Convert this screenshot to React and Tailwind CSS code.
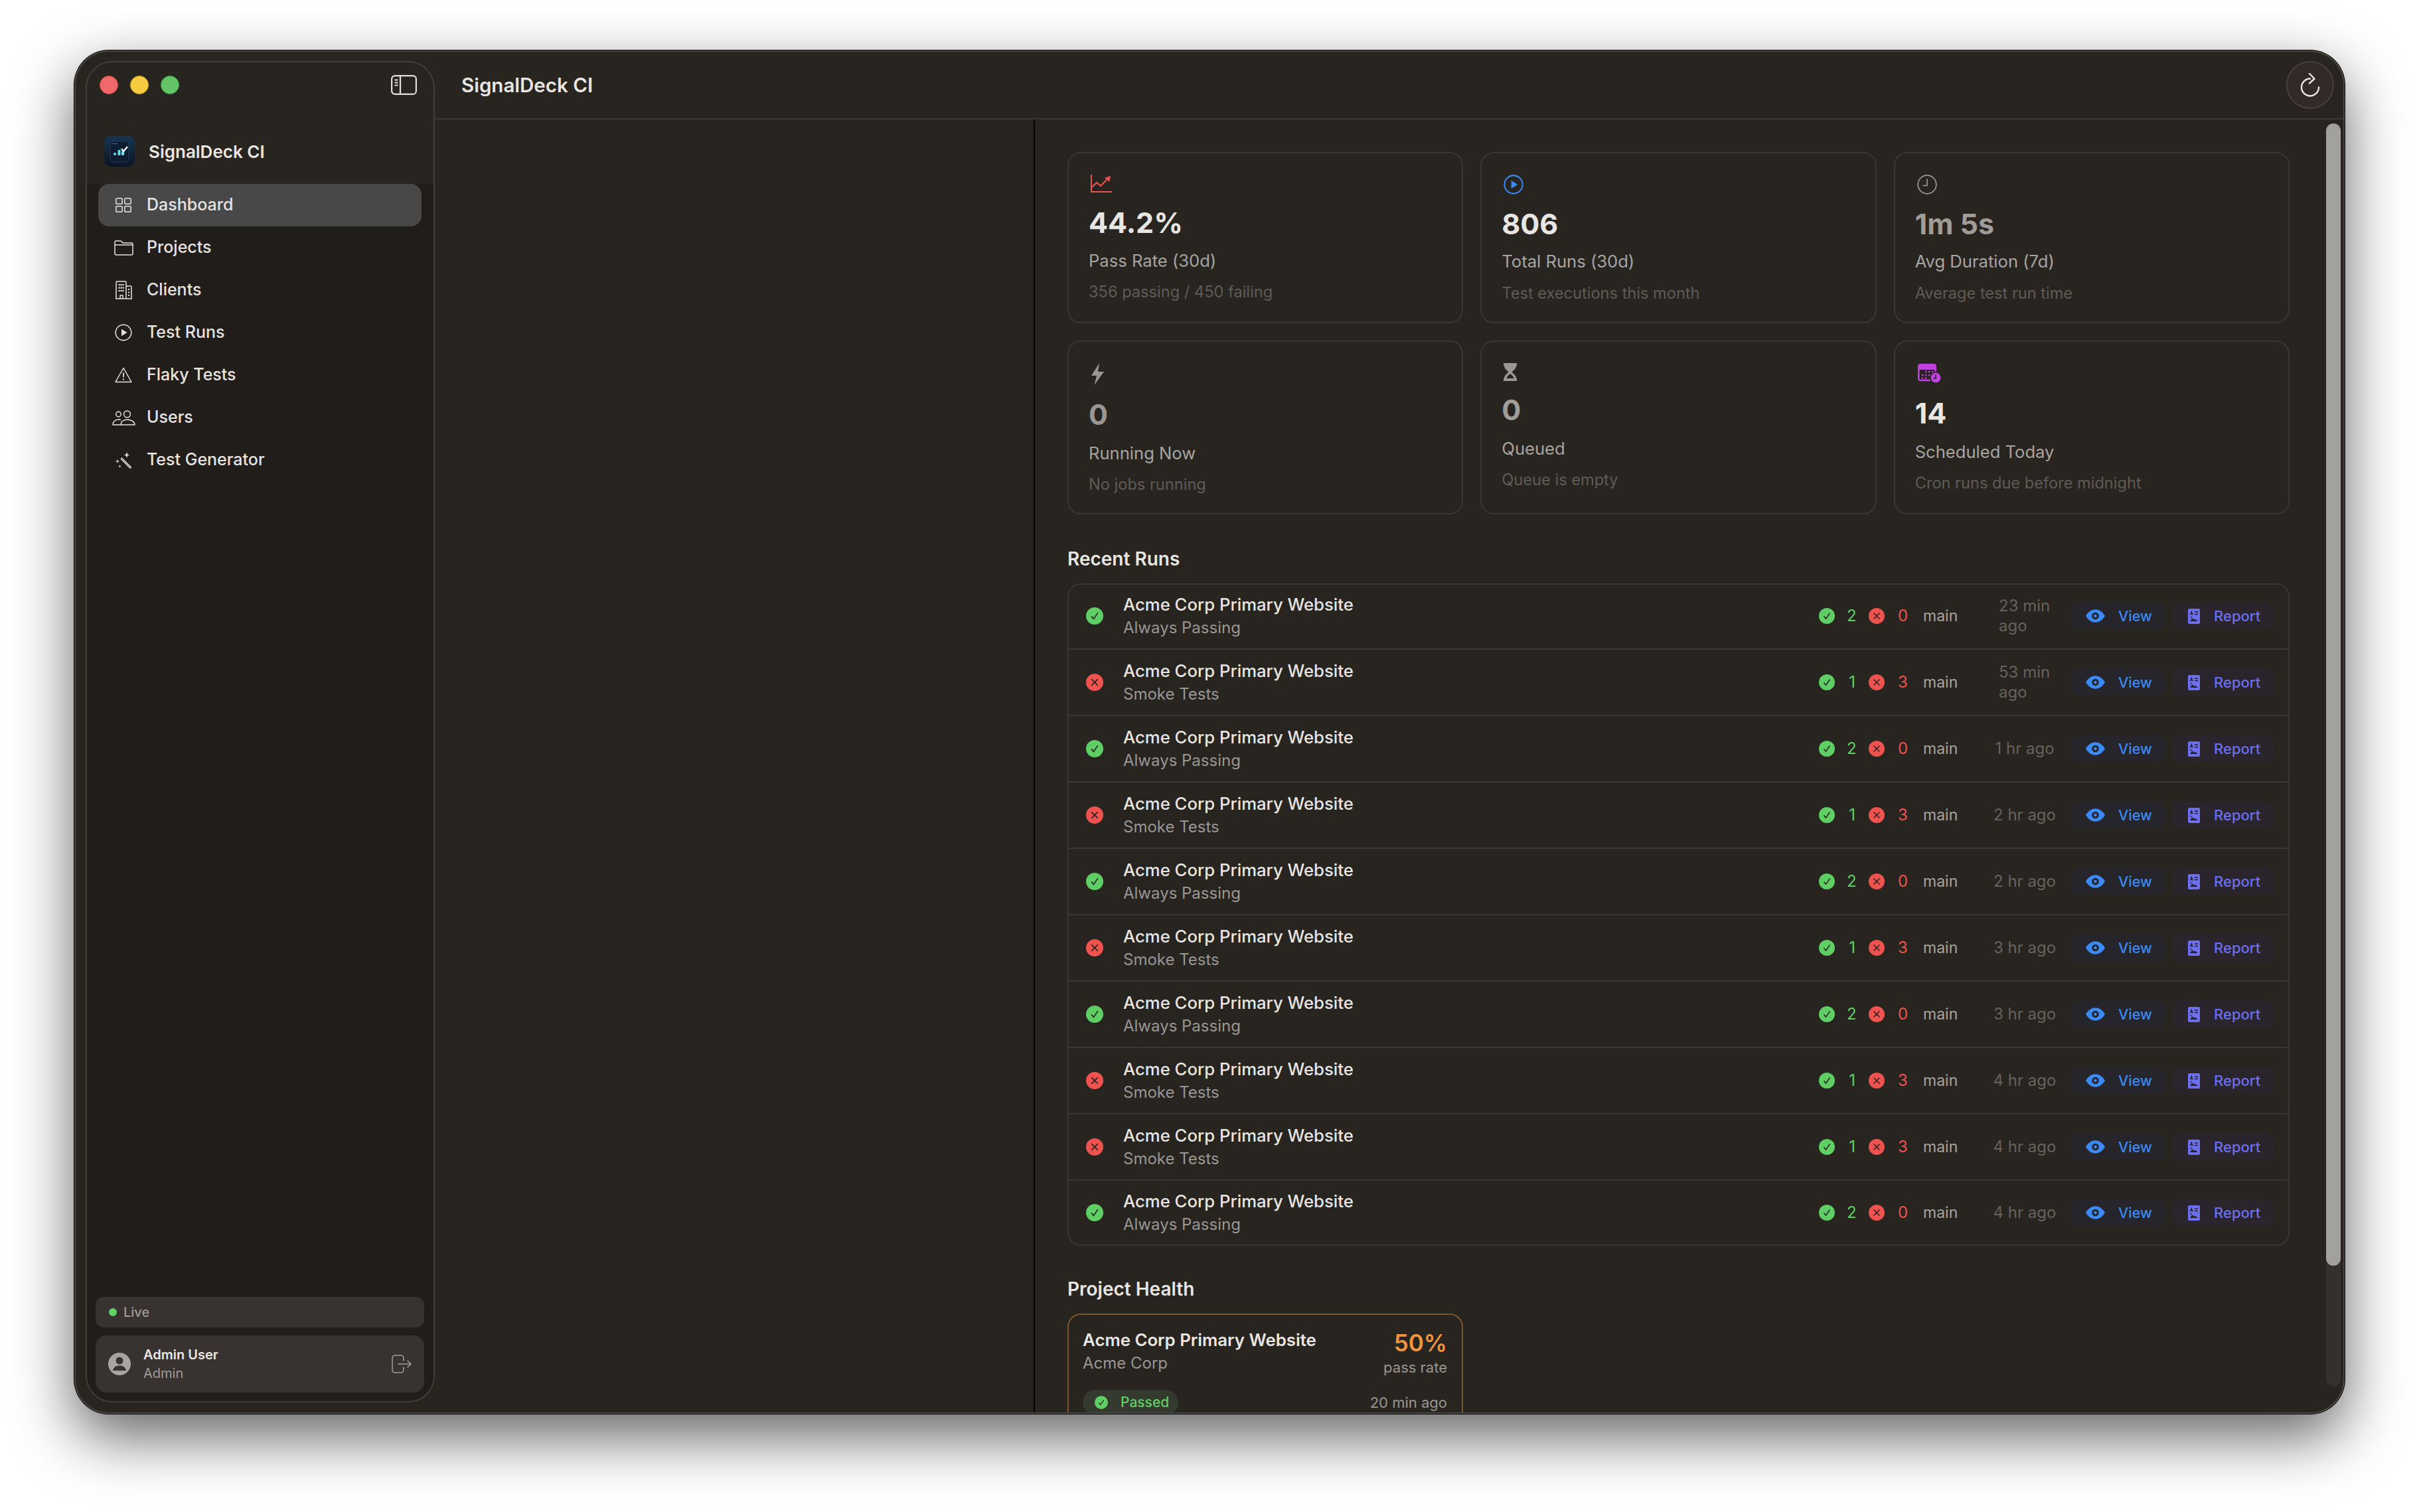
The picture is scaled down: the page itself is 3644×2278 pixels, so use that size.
import React from 'react';

const font = "font-['Inter','Noto_Sans',sans-serif]";

// sidebar icons, drawn to the reference's proportions
const DashIcon = () => (
  <svg viewBox="0 0 24 22" width="24" height="22" fill="none" stroke="currentColor" strokeWidth="1.5">
    <rect x="0.800" y="0.800" width="9.400" height="8.400" rx="1.800" />
    <rect x="13.800" y="0.800" width="9.400" height="8.400" rx="1.800" />
    <rect x="0.800" y="12.800" width="9.400" height="8.400" rx="1.800" />
    <rect x="13.800" y="12.800" width="9.400" height="8.400" rx="1.800" />
  </svg>
);
const FolderIcon = () => (
  <svg viewBox="0 0 29 23" width="29" height="23" fill="none" stroke="currentColor" strokeWidth="1.5" strokeLinejoin="round">
    <path d="M1 5V3a2 2 0 012-2h6.500a2 2 0 011.500.700L13 4h13a2 2 0 012 2v14a2 2 0 01-2 2H3a2 2 0 01-2-2z" />
    <path d="M1 7h27" />
  </svg>
);
const BuildingIcon = () => (
  <svg viewBox="0 0 25 28" width="25" height="28" fill="none" stroke="currentColor" strokeWidth="1.500">
    <path d="M1 27V2.500A1.500 1.500 0 012.500 1h12A1.500 1.500 0 0116 2.500V27M16 8h6.500A1.500 1.500 0 0124 9.500V27M0 27h25" />
    <path d="M7 27v-5h4v5" />
    <g fill="currentColor" stroke="none">
      <rect x="4.500" y="5" width="2.200" height="2.200" /><rect x="7.500" y="5" width="2.200" height="2.200" /><rect x="10.500" y="5" width="2.200" height="2.200" />
      <rect x="4.500" y="9.500" width="2.200" height="2.200" /><rect x="7.500" y="9.500" width="2.200" height="2.200" /><rect x="10.500" y="9.500" width="2.200" height="2.200" />
      <rect x="4.500" y="14" width="2.200" height="2.200" /><rect x="7.500" y="14" width="2.200" height="2.200" /><rect x="10.500" y="14" width="2.200" height="2.200" />
      <rect x="19" y="12" width="2" height="2" /><rect x="19" y="16.500" width="2" height="2" /><rect x="19" y="21" width="2" height="2" />
    </g>
  </svg>
);
const PlayIcon = ({ size = 26, sw = 1.500 }) => (
  <svg viewBox="0 0 26 26" width={size} height={size} fill="none" stroke="currentColor" strokeWidth={sw}>
    <circle cx="13" cy="13" r="11.800" />
    <path d="M10 7.800L18.500 13 10 18.200z" fill="currentColor" stroke="none" />
  </svg>
);
const WarnIcon = () => (
  <svg viewBox="0 0 26 24" width="26" height="24" fill="none" stroke="currentColor" strokeWidth="1.500" strokeLinejoin="round">
    <path d="M13 1.500L25 22.500H1z" />
    <path d="M13 8.500v7" strokeWidth="1.800" />
    <circle cx="13" cy="18.700" r="1.100" fill="currentColor" stroke="none" />
  </svg>
);
const UsersIcon = () => (
  <svg viewBox="0 0 35 23" width="35" height="23" fill="none" stroke="currentColor" strokeWidth="1.400" strokeLinejoin="round">
    <circle cx="9.500" cy="6" r="3.800" />
    <circle cx="22.500" cy="6" r="5" />
    <path d="M13 22c0-4.800 4-7.800 9.700-7.800 5.700 0 11.300 3 11.300 7.800z" />
    <path d="M13 14.800c-1-.5-2.200-.8-3.500-.8C4.800 14 1 17.500 1 22h12" />
  </svg>
);
const WandIcon = () => (
  <svg viewBox="0 0 25 25" width="25" height="25" fill="none" stroke="currentColor" strokeWidth="1.400">
    <path d="M9 8.500L24 23.500M7.800 10L22.800 25" />
    <g fill="currentColor" stroke="none">
      <path d="M17 0l1.100 3.400 3.400 1.100-3.400 1.100L17 9l-1.100-3.400-3.400-1.100 3.400-1.100z" />
      <path d="M3 11l.8 2.200 2.200.8-2.200.8L3 17l-.8-2.200L0 14l2.200-.8z" />
      <path d="M6.500 19l.6 1.900 1.900.6-1.900.6-.6 1.900-.6-1.900-1.900-.6 1.900-.6z" />
    </g>
  </svg>
);

const navItems = [
  { label: 'Dashboard', icon: <DashIcon />, active: true },
  { label: 'Projects', icon: <FolderIcon /> },
  { label: 'Clients', icon: <BuildingIcon /> },
  { label: 'Test Runs', icon: <PlayIcon /> },
  { label: 'Flaky Tests', icon: <WarnIcon /> },
  { label: 'Users', icon: <UsersIcon /> },
  { label: 'Test Generator', icon: <WandIcon /> },
];

const runs = [
  { ok: true, job: 'Always Passing', time: '23 min ago', wrap: true },
  { ok: false, job: 'Smoke Tests', time: '53 min ago', wrap: true },
  { ok: true, job: 'Always Passing', time: '1 hr ago' },
  { ok: false, job: 'Smoke Tests', time: '2 hr ago' },
  { ok: true, job: 'Always Passing', time: '2 hr ago' },
  { ok: false, job: 'Smoke Tests', time: '3 hr ago' },
  { ok: true, job: 'Always Passing', time: '3 hr ago' },
  { ok: false, job: 'Smoke Tests', time: '4 hr ago' },
  { ok: false, job: 'Smoke Tests', time: '4 hr ago' },
  { ok: true, job: 'Always Passing', time: '4 hr ago' },
];

const CheckDot = ({ size = 24 }) => (
  <svg viewBox="0 0 24 24" width={size} height={size} className="shrink-0 text-[#5fcf65]">
    <circle cx="12" cy="12" r="12" fill="currentColor" />
    <path d="M7.800 12.800l2.800 3.400 5.600-8.200" fill="none" stroke="#26221e" strokeWidth="1.500" strokeLinecap="round" strokeLinejoin="round" />
  </svg>
);

const CrossDot = ({ size = 24 }) => (
  <svg viewBox="0 0 24 24" width={size} height={size} className="shrink-0 text-[#ef5350]">
    <circle cx="12" cy="12" r="12" fill="currentColor" />
    <path d="M8 8l8 8M16 8l-8 8" fill="none" stroke="#26221e" strokeWidth="1.500" strokeLinecap="round" />
  </svg>
);

const EyeIcon = () => (
  <svg viewBox="0 0 30 20" width="29" height="20" className="shrink-0 text-[#3b8af5]">
    <path fillRule="evenodd" fill="currentColor" d="M15 0c7 0 12 5 15 10-3 5-8 10-15 10S3 15 0 10C3 5 8 0 15 0zm0 4.500a5.500 5.500 0 100 11 5.500 5.500 0 000-11zm0 3.200a2.300 2.300 0 110 4.600 2.300 2.300 0 010-4.600z" />
  </svg>
);

const ReportIcon = () => (
  <svg viewBox="0 0 18 23" width="18" height="23" className="shrink-0 text-[#6b6ff0]">
    <rect width="18" height="23" rx="2" fill="currentColor" />
    <g fill="none" stroke="#26221e" strokeWidth="1.300">
      <path d="M3.500 9.500l1.800-5 1.800 5M4.200 7.800h2.200" />
      <path d="M10 5h5M10 8.500h5" />
    </g>
    <path d="M3 19l3.500-5 2.500 3 1.500-1.500L15 19z" fill="#26221e" />
    <circle cx="4.500" cy="13" r="1.100" fill="#26221e" />
  </svg>
);

const ChartIcon = () => (
  <svg viewBox="0 0 32 27" width="32" height="27" className="text-[#ef5350]" fill="none" stroke="currentColor" strokeWidth="2">
    <path d="M1 0v26h31" />
    <path d="M2 19l7-7 6 5 9-9" strokeWidth="2.200" />
    <path d="M21 5l9-3-2 9z" fill="currentColor" stroke="none" />
  </svg>
);

const ClockIcon = () => (
  <svg viewBox="0 0 30 30" width="30" height="30" className="text-[#a09c98]" fill="none" stroke="currentColor" strokeWidth="1.700">
    <circle cx="15" cy="15" r="13.800" />
    <path d="M15 6.500V16.500H8.500" />
  </svg>
);

const BoltIcon = () => (
  <svg viewBox="0 0 21 33" width="21" height="33" className="text-[#9a9693]">
    <path d="M13 0L1 19h8L5.500 33 20 13h-9z" fill="currentColor" />
  </svg>
);

const HourglassIcon = () => (
  <svg viewBox="0 0 20 27" width="20" height="27" className="text-[#9a9693]">
    <path d="M0 0h20v4h-1c0 4-3 6-6.500 9.500C16 17 19 19 19 23h1v4H0v-4h1c0-4 3-6 6.500-9.500C4 10 1 8 1 4H0z" fill="currentColor" />
    <path d="M10 16c-3 2.800-5 4.500-5.500 7h11c-.5-2.500-2.500-4.200-5.500-7z" fill="#282420" />
  </svg>
);

const CalendarIcon = () => (
  <svg viewBox="0 0 36 30" width="36" height="30" className="text-[#c040e0]">
    <path d="M1 5a4 4 0 014-4h20a4 4 0 014 4v5H1z" fill="currentColor" />
    <path d="M2.300 9v14a3 3 0 003 3H20M27.700 9v7" fill="none" stroke="currentColor" strokeWidth="2.600" />
    <g fill="currentColor">
      <rect x="12" y="12" width="2.400" height="2.400" /><rect x="17" y="12" width="2.400" height="2.400" /><rect x="22" y="12" width="2.400" height="2.400" />
      <rect x="7" y="17" width="2.400" height="2.400" /><rect x="12" y="17" width="2.400" height="2.400" /><rect x="17" y="17" width="2.400" height="2.400" />
      <rect x="7" y="21.500" width="2.400" height="2.400" /><rect x="12" y="21.500" width="2.400" height="2.400" />
    </g>
    <circle cx="28" cy="22" r="9" fill="#282420" />
    <circle cx="28" cy="22" r="7.500" fill="currentColor" />
    <path d="M28 17.500V23h-3.500" fill="none" stroke="#282420" strokeWidth="1.700" />
  </svg>
);

const SidebarToggle = () => (
  <svg viewBox="0 0 39 30" width="39" height="30" fill="none" stroke="#e2e0dd" strokeWidth="2.200" className="shrink-0">
    <rect x="1.100" y="1.100" width="36.800" height="27.800" rx="5" />
    <path d="M14 1v28" />
    <path d="M5.500 7.500h5M5.500 11.500h5M5.500 15.500h5" strokeWidth="2" />
  </svg>
);

const RefreshIcon = () => (
  <svg viewBox="0 0 30 36" width="30" height="36" fill="none" stroke="#e8e6e3" strokeWidth="2.400" strokeLinecap="round" strokeLinejoin="round">
    <path d="M15 8.500A13 13 0 1028 21.500" />
    <path d="M14 1l7.500 7.500L14 15.500" />
  </svg>
);

const LogoutIcon = () => (
  <svg viewBox="0 0 30 28" width="30" height="28" fill="none" stroke="#a09c98" strokeWidth="1.600" strokeLinecap="round" strokeLinejoin="round" className="shrink-0">
    <path d="M18 9V5a4 4 0 00-4-4H5a4 4 0 00-4 4v18a4 4 0 004 4h9a4 4 0 004-4v-4" />
    <path d="M10 14h19M24 9l5 5-5 5" />
  </svg>
);

const AvatarIcon = () => (
  <svg viewBox="0 0 34 34" width="34" height="34" className="shrink-0">
    <circle cx="17" cy="17" r="17" fill="#a8a4a0" />
    <circle cx="17" cy="12" r="5.500" fill="#383330" />
    <path d="M7 27c.5-5 4.500-7.500 10-7.500S26.500 22 27 27z" fill="#383330" />
  </svg>
);

const AppLogo = () => (
  <svg viewBox="0 0 46 46" width="46" height="46" className="shrink-0">
    <defs>
      <linearGradient id="logoBg" x1="0" y1="0" x2="0" y2="1">
        <stop offset="0" stopColor="#173552" />
        <stop offset="1" stopColor="#0b1524" />
      </linearGradient>
    </defs>
    <rect width="46" height="46" rx="10" fill="url(#logoBg)" />
    <rect x="9" y="8" width="28" height="31" rx="6" fill="#0d1c30" stroke="#2c4a68" strokeWidth="0.700" />
    <g fill="#66dff0">
      <circle cx="16" cy="27" r="2" />
      <rect x="20.500" y="21" width="4" height="8" rx="1" />
      <rect x="26" y="23" width="4" height="6" rx="1" />
    </g>
    <path d="M26 19l3 4 6-7" fill="none" stroke="#e8f6fa" strokeWidth="2.400" />
    <g fill="#5a8fb0">
      <rect x="12" y="11" width="2" height="1" /><rect x="15" y="11" width="2" height="1" /><rect x="18" y="11" width="2" height="1" />
    </g>
  </svg>
);

function StatCard({ icon, value, label, desc, valueClass = 'text-[#e8e6e3]', iconBox = 'h-[30px]', valueBox = 'mt-[18px]', labelBox = 'mt-[13px]', descBox = 'mt-[13px]' }) {
  return (
    <div className="rounded-[20px] border-2 border-[#3a3632] pt-[32px] px-[30px]">
      <div className={`flex items-start pl-[3px] ${iconBox}`}>{icon}</div>
      <div className={`${valueBox} text-[43px] leading-[52px] font-bold ${valueClass}`}>{value}</div>
      <div className={`${labelBox} text-[25.600px] leading-[36px] text-[#a8a4a0]`}>{label}</div>
      <div className={`${descBox} text-[23.600px] leading-[34px] text-[#5f5b57]`}>{desc}</div>
    </div>
  );
}

function RunRow({ run, first, last }) {
  const size = first ? 'h-[98px] pb-[2px] border-b-2 border-[#3a3632]' : last ? 'h-[96px]' : 'h-[100px] border-b-2 border-[#3a3632]';
  return (
    <div className={`flex items-center pl-[26px] pr-[22px] ${size}`}>
      {run.ok ? <CheckDot size={26} /> : <CrossDot size={26} />}
      <div className="ml-[30px] min-w-0">
        <div className="text-[25.700px] leading-[35px] font-medium text-[#e8e6e3]">Acme Corp Primary Website</div>
        <div className="text-[24px] leading-[35px] text-[#9a9693]">{run.job}</div>
      </div>
      <div className="ml-auto flex items-center">
        <CheckDot />
        <span className="ml-[18px] w-[13px] text-right text-[24px] text-[#5fcf65]">{run.ok ? '2' : '1'}</span>
        <span className="ml-[20px]"><CrossDot /></span>
        <span className="ml-[20px] w-[14px] text-[24px] text-[#ef5350]">{run.ok ? '0' : '3'}</span>
        <span className="ml-[24px] w-[54px] text-[23px] text-[#a8a4a0]">main</span>
        <div className="ml-[54px] w-[90px] flex justify-center">
          <span className={`text-[24px] leading-[30px] text-[#66625e] ${run.wrap ? 'w-[78px]' : 'whitespace-nowrap'}`}>{run.time}</span>
        </div>
        <div className="ml-[25px] flex items-center w-[141px] h-[40px] rounded-[12px] bg-[#25252b] pl-[22px]">
          <EyeIcon />
          <span className="ml-[20px] text-[21.500px] font-medium text-[#3b8af5]">View</span>
        </div>
        <div className="ml-[12px] flex items-center w-[152px] h-[40px] rounded-[12px] bg-[#2a252c] pl-[23px]">
          <ReportIcon />
          <span className="ml-[21px] text-[22px] font-medium text-[#6b6ff0]">Report</span>
        </div>
      </div>
    </div>
  );
}

export default function App() {
  return (
    <div className={`w-[3644px] h-[2278px] bg-white pt-[76px] pl-[112px] overflow-hidden ${font}`}>
      <div className="flex w-[3420px] h-[2054px] rounded-[52px] overflow-hidden bg-[#282420] border-2 border-[#4c4845] shadow-[0_0_0_1px_#000,0_34px_90px_rgba(0,0,0,0.62)]">
        <aside className="ml-[15px] mt-[14px] mb-[15px] w-[526px] shrink-0 flex flex-col rounded-[40px] border-2 border-[#443c37] bg-[linear-gradient(180deg,#282420_0,#282420_182px,#211d1a_184px)] px-[17px]">
          <div className="flex items-center justify-between h-[68px] pl-[2px] pr-[8px]">
            <div className="flex gap-[18px]">
              <span className="w-[28px] h-[28px] rounded-full bg-[#f1686b] border border-[#d94b4e]" />
              <span className="w-[28px] h-[28px] rounded-full bg-[#f5cb3f] border border-[#dca922]" />
              <span className="w-[28px] h-[28px] rounded-full bg-[#62c466] border border-[#3ca643]" />
            </div>
            <SidebarToggle />
          </div>
          <div className="flex items-center h-[72px] mt-[30px] pl-[9px]">
            <AppLogo />
            <span className="ml-[21px] text-[26px] font-semibold text-[#e8e6e3]">SignalDeck CI</span>
          </div>
          <nav className="mt-[13px]">
            {navItems.map(({ label, icon, active }) => (
              <div key={label} className={`flex items-center h-[64px] w-[487px] rounded-[16px] pl-[20px] text-[25px] font-medium text-[#e6e4e1] ${active ? 'bg-[#484848]' : ''}`}>
                <span className="w-[36px] flex justify-center">{icon}</span>
                <span className="ml-[17px]">{label}</span>
              </div>
            ))}
          </nav>
          <div className="mt-auto mb-[13px] -ml-[4px] -mr-[3px]">
            <div className="flex items-center h-[46px] rounded-[12px] bg-[#383330] pl-[20px]">
              <span className="w-[12px] h-[12px] rounded-full bg-[#5fd268]" />
              <span className="ml-[10px] text-[20px] font-medium text-[#a09c98]">Live</span>
            </div>
            <div className="flex items-center h-[86px] mt-[12px] rounded-[16px] bg-[#383330] pl-[19px] pr-[19px]">
              <AvatarIcon />
              <div className="ml-[19px]">
                <div className="text-[20px] leading-[28px] font-semibold text-[#e8e6e3]">Admin User</div>
                <div className="text-[20px] leading-[28px] text-[#a09c98]">Admin</div>
              </div>
              <span className="ml-auto"><LogoutIcon /></span>
            </div>
          </div>
        </aside>
        <main className="flex-1 min-w-0 flex flex-col">
          <header className="flex items-center justify-between h-[102px] shrink-0 border-b-2 border-[#3a3632] pl-[40px] pr-[14px]">
            <h1 className="text-[29.500px] font-semibold text-[#e8e6e3]">SignalDeck CI</h1>
            <div className="flex items-center justify-center w-[72px] h-[72px] rounded-full border-2 border-[#4a403b] bg-[#312a27]">
              <RefreshIcon />
            </div>
          </header>
          <div className="flex-1 min-h-0 flex">
            <div className="w-[904px] shrink-0 border-r-2 border-black" />
            <div className="flex-1 min-w-0 relative overflow-hidden">
              <div className="w-[1841px] ml-[49px] pt-[49px]">
                <div className="grid grid-cols-3 grid-rows-[258px_262px] gap-[26px]">
                  <StatCard icon={<ChartIcon />} iconBox="h-[27px]" valueBox="mt-[19px]" labelBox="mt-[14px]" descBox="mt-[12px]" value="44.2%" label="Pass Rate (30d)" desc="356 passing / 450 failing" />
                  <StatCard icon={<span className="text-[#3b8af5]"><PlayIcon size={30} sw={1.800} /></span>} value="806" label="Total Runs (30d)" desc="Test executions this month" />
                  <StatCard icon={<ClockIcon />} value="1m 5s" valueClass="text-[#a09c98]" label="Avg Duration (7d)" desc="Average test run time" />
                  <StatCard icon={<BoltIcon />} iconBox="h-[33px]" valueBox="mt-[18px]" labelBox="mt-[15px]" descBox="mt-[12px]" value="0" valueClass="text-[#9a9693]" label="Running Now" desc="No jobs running" />
                  <StatCard icon={<HourglassIcon />} iconBox="h-[27px]" valueBox="mt-[17px]" labelBox="mt-[15px]" descBox="mt-[12px]" value="0" valueClass="text-[#a09c98]" label="Queued" desc="Queue is empty" />
                  <StatCard icon={<CalendarIcon />} iconBox="h-[30px]" valueBox="mt-[19px]" labelBox="mt-[15px]" descBox="mt-[12px]" value="14" label="Scheduled Today" desc="Cron runs due before midnight" />
                </div>
                <h2 className="mt-[49px] text-[28px] leading-[36px] font-semibold text-[#e8e6e3]">Recent Runs</h2>
                <div className="mt-[19px] rounded-[20px] border-2 border-[#3a3632]">
                  {runs.map((run, i) => <RunRow key={i} run={run} first={i === 0} last={i === runs.length - 1} />)}
                </div>
                <h2 className="mt-[47px] text-[28px] leading-[36px] font-semibold text-[#e8e6e3]">Project Health</h2>
                <div className="mt-[19px] w-[596px] h-[260px] rounded-[20px] border-2 border-[#7a5530] pl-[21px] pr-[22px] pt-[20px]">
                  <div className="flex justify-between">
                    <div>
                      <div className="text-[25.800px] leading-[35px] font-semibold text-[#e8e6e3]">Acme Corp Primary Website</div>
                      <div className="text-[24px] leading-[35px] text-[#9a9693]">Acme Corp</div>
                    </div>
                    <div className="text-right">
                      <div className="text-[35px] leading-[44px] font-semibold text-[#f0943f]">50%</div>
                      <div className="text-[22px] leading-[30px] text-[#9a9693]">pass rate</div>
                    </div>
                  </div>
                  <div className="flex items-center justify-between mt-[19px]">
                    <div className="flex items-center h-[38px] w-[144px] rounded-full bg-[#343a2d] pl-[18px]">
                      <CheckDot size={20} />
                      <span className="ml-[19px] text-[21px] font-medium text-[#5fcf65]">Passed</span>
                    </div>
                    <span className="text-[22px] text-[#9a9693]">20 min ago</span>
                  </div>
                </div>
              </div>
              {/* overlay scrollbar */}
              <div className="absolute right-[4px] top-[6px] bottom-[39px] w-[22px] rounded-full bg-[#35302d]">
                <div className="w-[22px] h-[1721px] rounded-full bg-[#a3a19e]" />
              </div>
            </div>
          </div>
        </main>
      </div>
    </div>
  );
}
